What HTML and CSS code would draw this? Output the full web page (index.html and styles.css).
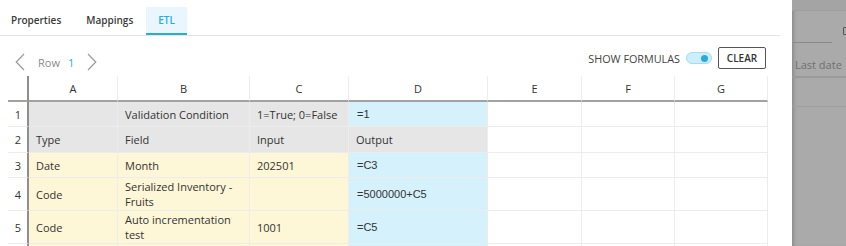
FILE: index.html
```html
<!DOCTYPE html>
<html>
<head>
<meta charset="utf-8">
<link rel="stylesheet" href="styles.css">
</head>
<body>
<div class="app">
  <div class="main">
    <div class="tabs">
      <div class="tab first">Properties</div>
      <div class="tab">Mappings</div>
      <div class="tab active">ETL</div>
    </div>
    <div class="toolbar">
      <div class="nav">
        <svg class="chev" width="10" height="18" viewBox="0 0 10 18"><path d="M9 1 L1.2 9 L9 17" fill="none" stroke="#9a9a9a" stroke-width="1.2"/></svg>
        <span class="row-label">Row</span>
        <span class="row-num">1</span>
        <svg class="chev chev-r" width="10" height="18" viewBox="0 0 10 18"><path d="M1 1 L8.8 9 L1 17" fill="none" stroke="#9a9a9a" stroke-width="1.2"/></svg>
      </div>
      <div class="actions">
        <span class="formula-label">SHOW FORMULAS</span>
        <span class="toggle"><span class="knob"></span></span>
        <button class="clear">CLEAR</button>
      </div>
    </div>
    <table class="sheet">
      <thead>
        <tr>
          <th class="rn w-rn"></th>
          <th class="w-a">A</th>
          <th class="w-b">B</th>
          <th class="w-c">C</th>
          <th class="w-d">D</th>
          <th class="w-e">E</th>
          <th class="w-f">F</th>
          <th class="w-g">G</th>
        </tr>
      </thead>
      <tbody>
        <tr>
          <td class="rn">1</td>
          <td class="gray"></td>
          <td class="gray">Validation Condition</td>
          <td class="gray">1=True; 0=False</td>
          <td class="blue formula">=1</td>
          <td></td><td></td><td></td>
        </tr>
        <tr class="r2">
          <td class="rn">2</td>
          <td class="gray">Type</td>
          <td class="gray">Field</td>
          <td class="gray">Input</td>
          <td class="gray">Output</td>
          <td></td><td></td><td></td>
        </tr>
        <tr>
          <td class="rn">3</td>
          <td class="yellow">Date</td>
          <td class="yellow">Month</td>
          <td class="yellow">202501</td>
          <td class="blue formula">=C3</td>
          <td></td><td></td><td></td>
        </tr>
        <tr>
          <td class="rn">4</td>
          <td class="yellow">Code</td>
          <td class="yellow">Serialized Inventory - Fruits</td>
          <td class="yellow"></td>
          <td class="blue formula">=5000000+C5</td>
          <td></td><td></td><td></td>
        </tr>
        <tr>
          <td class="rn">5</td>
          <td class="yellow">Code</td>
          <td class="yellow">Auto incrementation test</td>
          <td class="yellow">1001</td>
          <td class="blue formula">=C5</td>
          <td></td><td></td><td></td>
        </tr>
        <tr>
          <td class="rn"></td>
          <td class="yellow"></td>
          <td class="yellow"></td>
          <td class="yellow"></td>
          <td class="blue"></td>
          <td></td><td></td><td></td>
        </tr>
      </tbody>
    </table>
  </div>
  <div class="side">
    <div class="side-top"></div>
    <div class="side-filter">
      <span class="side-input"></span>
      <span class="side-check"></span>
    </div>
    <div class="side-head">Last date</div>
    <div class="side-row"></div>
  </div>
</div>
</body>
</html>
```
FILE: styles.css
```css
* { box-sizing: border-box; }
html, body {
  margin: 0;
  padding: 0;
  width: 846px;
  height: 246px;
  overflow: hidden;
  background: #fff;
  font-family: "Open Sans", "Liberation Sans", sans-serif;
  color: #333;
}
.app {
  display: flex;
  height: 246px;
}
.main {
  width: 792px;
  flex: none;
  background: #fff;
}
.tabs {
  display: flex;
  margin-right: 12px;
  padding-top: 7px;
  border-bottom: 1px solid #e4e4e4;
  height: 36px;
}
.tab {
  height: 28px;
  padding: 0 12.5px;
  font-size: 10px;
  font-weight: 600;
  color: #3a3a3a;
  line-height: 27px;
  border-bottom: 2px solid transparent;
}
.tab.first { padding-left: 11px; }
.tab.active {
  background: #e9f6fd;
  color: #29abe2;
  border-bottom-color: #29abe2;
}
.toolbar {
  display: flex;
  justify-content: space-between;
  align-items: flex-start;
  height: 40px;
  padding-right: 26px;
}
.nav {
  display: flex;
  align-items: center;
  height: 20px;
  margin-top: 16px;
  padding-left: 15px;
}
.chev { display: block; }
.row-label {
  margin-left: 13px;
  font-size: 11px;
  color: #8a8a8a;
}
.row-num {
  margin-left: 8px;
  font-size: 11px;
  color: #29abe2;
}
.chev-r { margin-left: 13px; }
.actions {
  display: flex;
  align-items: center;
  margin-top: 11px;
  height: 22px;
}
.formula-label {
  font-size: 10.8px;
  color: #444;
}
.toggle {
  position: relative;
  margin-left: 6px;
  width: 26px;
  height: 12px;
  border-radius: 6px;
  background: #cdeefb;
  border: 1px solid #a6dcf3;
}
.knob {
  position: absolute;
  right: 3px;
  top: 1.5px;
  width: 7px;
  height: 7px;
  border-radius: 50%;
  background: #29abe2;
}
.clear {
  margin-left: 6px;
  width: 48px;
  height: 22px;
  padding: 0;
  border: 1px solid #555;
  border-radius: 2px;
  background: #fff;
  font-family: "Open Sans", "Liberation Sans", sans-serif;
  font-size: 10px;
  font-weight: 600;
  color: #333;
}
.sheet {
  margin-left: 8px;
  table-layout: fixed;
  border-collapse: separate;
  border-spacing: 0;
  width: 760px;
  font-size: 11px;
  line-height: 15px;
}
.sheet th, .sheet td {
  border-right: 1px solid #ececec;
  border-bottom: 1px solid #ececec;
  padding: 1px 6px;
  vertical-align: middle;
  text-align: left;
  font-weight: 400;
}
.sheet th {
  height: 26px;
  text-align: center;
  border-bottom: 2px solid #a2a2a2;
  color: #333;
}
.sheet td { height: 25px; }
.sheet tr.r2 td { height: 26px; }
.sheet .rn {
  padding: 0;
  text-align: center;
  border-right: 2px solid #8e8e8e;
}
.sheet td.rn { padding-left: 1px; }
.w-rn { width: 21px; }
.w-a { width: 89px; }
.w-b { width: 132px; }
.w-c { width: 99px; }
.w-d { width: 139px; }
.w-e { width: 94px; }
.w-f { width: 93px; }
.w-g { width: 93px; }
.gray { background: #e6e6e6; }
.yellow { background: #fef7d7; }
.blue { background: #d5f1fb; }
.sheet td.formula {
  font-family: "Liberation Sans", Arial, sans-serif;
  font-size: 11px;
  padding-left: 8px;
}
.sheet td.gray, .sheet td.yellow { padding-left: 7px; }
.side {
  flex: 1;
  background: #aaaaaa;
  box-shadow: inset 4px 0 4px -3px rgba(0,0,0,0.25);
}
.side-top {
  height: 11px;
  background: #a4a4a4;
  border-bottom: 1px solid #9e9e9e;
}
.side-filter {
  display: flex;
  align-items: flex-start;
  height: 33px;
}
.side-input {
  margin-top: 31px;
  margin-left: 1px;
  width: 39px;
  height: 1px;
  background: #8a8a8a;
}
.side-check {
  margin-top: 16px;
  margin-left: 11px;
  width: 9px;
  height: 8px;
  border: 1.5px solid #555;
  border-radius: 1px;
}
.side-head {
  height: 34px;
  padding: 13px 0 0 3px;
  font-size: 11px;
  line-height: 15px;
  color: #707070;
  border-bottom: 2px solid #9a9a9a;
}
.side-row {
  height: 29px;
  border-bottom: 1px solid #a0a0a0;
}
```
